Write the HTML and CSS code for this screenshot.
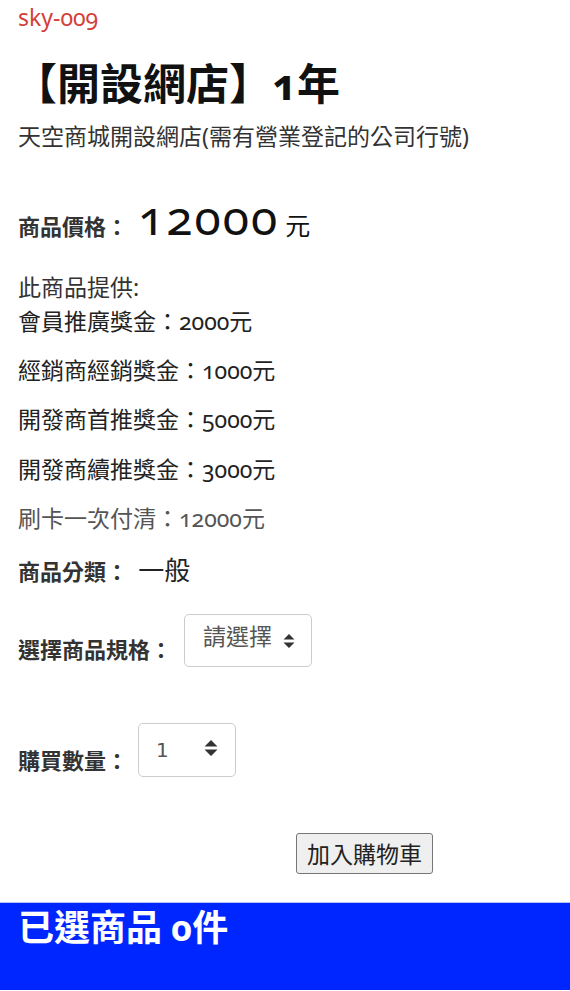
FILE: index.html
```html
<!DOCTYPE html>
<html lang="zh-Hant">
<head>
    <meta charset="UTF-8">
    <meta name="viewport" content="width=device-width, initial-scale=1.0">
    <title>sky-009 開設網店</title>
    <link rel="stylesheet" href="styles.css">
</head>
<body>
    <div class="product">
        <div class="sku">sky-009</div>
        <h1 class="title">【開設網店】1年</h1>
        <p class="subtitle">天空商城開設網店(需有營業登記的公司行號)</p>

        <div class="price-row">
            <span class="label">商品價格：</span>
            <span class="price">12000</span>
            <span class="unit">元</span>
        </div>

        <div class="bonus">
            <div class="bonus-head">此商品提供:</div>
            <div class="bonus-item">會員推廣獎金：2000元</div>
            <div class="bonus-item">經銷商經銷獎金：1000元</div>
            <div class="bonus-item">開發商首推獎金：5000元</div>
            <div class="bonus-item">開發商續推獎金：3000元</div>
            <div class="bonus-item muted">刷卡一次付清：12000元</div>
        </div>

        <div class="category">
            <span class="label">商品分類：</span>
            <span class="category-name">一般</span>
        </div>

        <div class="field spec-field">
            <label class="label" for="spec">選擇商品規格：</label>
            <div class="control">
                <select id="spec" class="select">
                    <option>請選擇</option>
                </select>
                <svg class="updown" width="12" height="16" viewBox="0 0 12 16"><path d="M6 1 L11.5 6.5 H0.5 Z M6 15 L11.5 9.5 H0.5 Z" fill="#333"/></svg>
            </div>
        </div>

        <div class="field qty-field">
            <label class="label" for="qty">購買數量：</label>
            <div class="control">
                <input id="qty" class="qty" type="number" value="1" min="1">
                <svg class="updown" width="14" height="18" viewBox="0 0 14 18"><path d="M7 1 L13.5 7.5 H0.5 Z M7 17 L13.5 10.5 H0.5 Z" fill="#333"/></svg>
            </div>
        </div>

        <div class="actions">
            <button type="button" class="add-btn">加入購物車</button>
        </div>
    </div>

    <div class="cart-bar">已選商品 0件</div>
</body>
</html>
```

FILE: styles.css
```css
body {
    margin: 0;
    padding: 0;
    font-family: "Noto Sans", "Noto Sans CJK TC", sans-serif;
    font-variant-numeric: oldstyle-nums;
    color: #222;
    background: #fff;
}
.product {
    padding: 0 18px;
}
.sku {
    color: #d43f3a;
    font-size: 23px;
    line-height: 26px;
    padding-top: 4px;
}
.title {
    font-size: 43px;
    font-weight: 700;
    line-height: 48px;
    margin: 30px 0 0 -4px;
    color: #111;
}
.subtitle {
    font-size: 23px;
    line-height: 30px;
    color: #333;
    margin: 13px 0 0;
}
.price-row {
    display: flex;
    align-items: baseline;
    margin-top: 40px;
    height: 52px;
}
.label {
    font-weight: 700;
    font-size: 22px;
    color: #333;
}
.price {
    font-size: 48px;
    line-height: 52px;
    color: #111;
    margin-left: 10px;
    letter-spacing: 2px;
}
.unit {
    font-size: 25px;
    color: #111;
    margin-left: 6px;
}
.bonus {
    margin-top: 29px;
    font-size: 23px;
}
.bonus-head {
    line-height: 30px;
    color: #333;
}
.bonus-item {
    line-height: 30px;
    margin-top: 19.2px;
    color: #222;
}
.bonus-head + .bonus-item {
    margin-top: 4px;
}
.bonus-item.muted {
    color: #555;
}
.category {
    margin-top: 22px;
    line-height: 30px;
}
.category-name {
    font-size: 26px;
    color: #222;
    margin-left: 6px;
}
.field {
    display: flex;
    align-items: flex-start;
}
.field .label {
    line-height: 30px;
}
.spec-field {
    margin-top: 25px;
}
.spec-field .label {
    margin-top: 20px;
    margin-right: 12px;
}
.qty-field {
    margin-top: 56px;
}
.qty-field .label {
    margin-top: 22px;
    margin-right: 10px;
}
.control {
    position: relative;
}
.select {
    appearance: none;
    -webkit-appearance: none;
    width: 128px;
    height: 53px;
    border: 1px solid #ccc;
    border-radius: 5px;
    background: #fff;
    font-family: inherit;
    font-size: 23px;
    color: #555;
    padding: 0 0 8px 18px;
    margin: 0;
}
.updown {
    position: absolute;
    pointer-events: none;
}
.spec-field .updown {
    left: 99px;
    top: 19px;
}
.qty {
    appearance: textfield;
    -moz-appearance: textfield;
    width: 98px;
    height: 54px;
    box-sizing: border-box;
    border: 1px solid #ccc;
    border-radius: 5px;
    font-family: "DejaVu Sans", sans-serif;
    font-size: 20px;
    color: #555;
    padding: 0 0 0 17px;
    margin: 0;
}
.qty::-webkit-inner-spin-button,
.qty::-webkit-outer-spin-button {
    -webkit-appearance: none;
    margin: 0;
}
.qty-field .updown {
    left: 66px;
    top: 16px;
}
.actions {
    margin-top: 56px;
    padding-left: 278px;
}
.add-btn {
    font-family: inherit;
    font-size: 23px;
    color: #222;
    background: #efefef;
    border: 1px solid #767676;
    border-radius: 3px;
    width: 137px;
    height: 41px;
    padding: 0;
}
.cart-bar {
    margin-top: 28px;
    background: #0026ff;
    border-top: 1px solid #b9c2f2;
    color: #fff;
    font-weight: 700;
    font-size: 36px;
    line-height: 44px;
    padding: 3px 18px 40px;
}
```
